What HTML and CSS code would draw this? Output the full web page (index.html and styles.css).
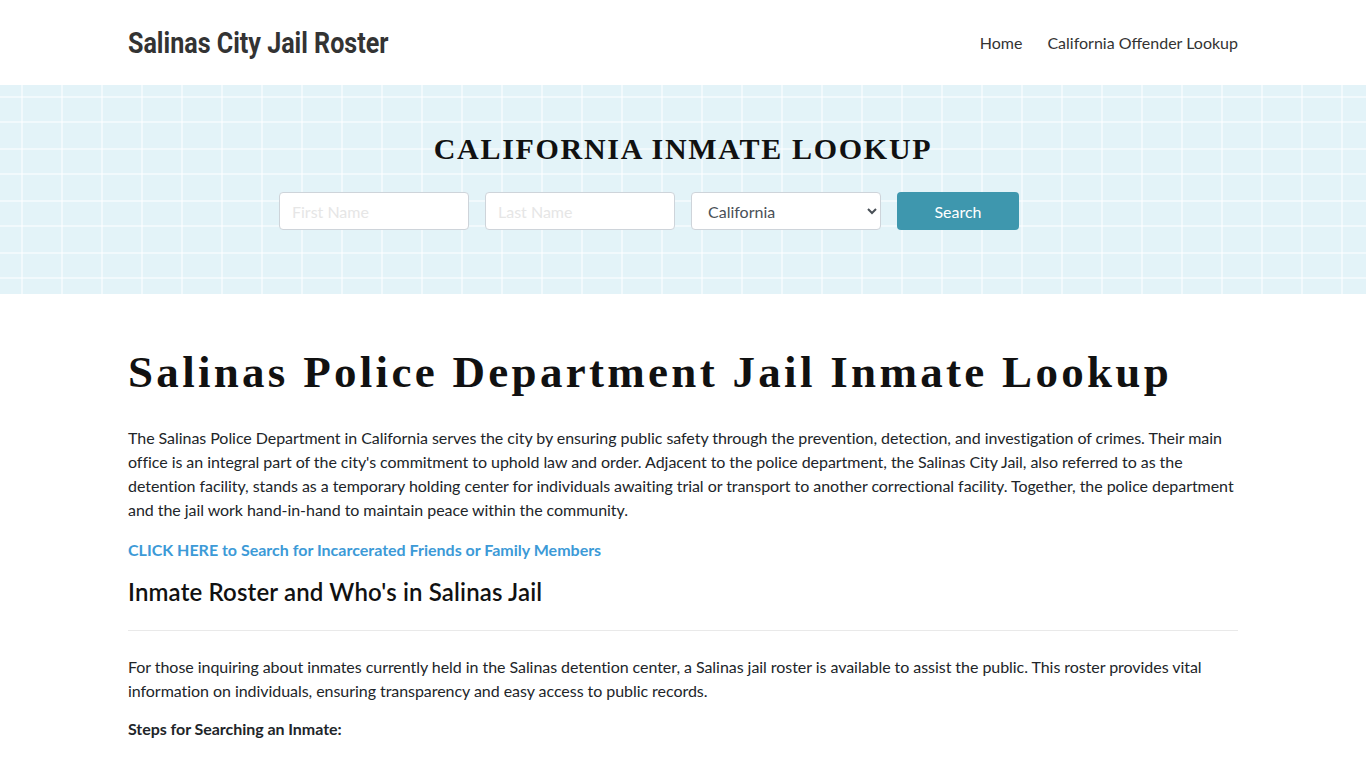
FILE: index.html
```html
<!DOCTYPE html>
<html lang="en">
<head>
<meta charset="utf-8">
<title>Salinas City Jail Roster</title>
<link rel="stylesheet" href="styles.css">
</head>
<body>
<header class="site-header">
  <div class="container header-row">
    <a class="logo" href="#">Salinas City Jail Roster</a>
    <nav class="nav">
      <a href="#">Home</a>
      <a href="#">California Offender Lookup</a>
    </nav>
  </div>
</header>
<section class="banner">
  <h2 class="banner-title">CALIFORNIA INMATE LOOKUP</h2>
  <form class="search-form">
    <input class="field" type="text" placeholder="First Name">
    <input class="field" type="text" placeholder="Last Name">
    <select class="field select">
      <option>California</option>
    </select>
    <button class="btn" type="button">Search</button>
  </form>
</section>
<main class="container content">
  <h1 class="page-title">Salinas Police Department Jail Inmate Lookup</h1>
  <p>The Salinas Police Department in California serves the city by ensuring public safety through the prevention, detection, and investigation of crimes. Their main office is an integral part of the city's commitment to uphold law and order. Adjacent to the police department, the Salinas City Jail, also referred to as the detention facility, stands as a temporary holding center for individuals awaiting trial or transport to another correctional facility. Together, the police department and the jail work hand-in-hand to maintain peace within the community.</p>
  <p><a class="cta" href="#">CLICK HERE to Search for Incarcerated Friends or Family Members</a></p>
  <h2 class="section-title">Inmate Roster and Who's in Salinas Jail</h2>
  <hr class="divider">
  <p class="tight">For those inquiring about inmates currently held in the Salinas detention center, a Salinas jail roster is available to assist the public. This roster provides vital information on individuals, ensuring transparency and easy access to public records.</p>
  <p class="steps">Steps for Searching an Inmate:</p>
</main>
</body>
</html>
```
FILE: styles.css
```css
* { box-sizing: border-box; }
html, body { margin: 0; padding: 0; }
body {
  font-family: Lato, "Open Sans", sans-serif;
  font-size: 16px;
  line-height: 24px;
  letter-spacing: -0.05px;
  color: #212529;
  background: #fff;
}
a { text-decoration: none; }
.container {
  width: 1110px;
  margin: 0 auto;
}
.site-header { height: 85px; }
.header-row {
  height: 85px;
  display: flex;
  align-items: center;
  justify-content: space-between;
}
.logo {
  display: inline-block;
  font-family: Roboto, "DejaVu Sans Condensed", sans-serif;
  font-weight: bold;
  font-size: 29px;
  line-height: 34px;
  letter-spacing: 0;
  color: #333;
  transform: scaleX(0.865);
  transform-origin: left center;
  padding-top: 1px;
}
.nav { display: flex; gap: 25px; }
.nav a { color: #333; font-size: 16px; letter-spacing: 0; }
.banner {
  height: 209px;
  background-color: #e3f3f8;
  background-image:
    linear-gradient(90deg, transparent 21px, rgba(255,255,255,0.5) 21px, rgba(255,255,255,0.5) 23px, transparent 23px),
    linear-gradient(180deg, transparent 11px, rgba(255,255,255,0.5) 11px, rgba(255,255,255,0.5) 13px, transparent 13px, transparent 36px, rgba(255,255,255,0.5) 36px, rgba(255,255,255,0.5) 38px, transparent 38px);
  background-size: 40px 100%, 100% 52px;
  padding-top: 46px;
}
.banner-title {
  margin: 0;
  text-align: center;
  font-family: "Liberation Serif", serif;
  font-weight: bold;
  font-size: 30px;
  line-height: 36px;
  letter-spacing: 1.7px;
  color: #111;
}
.search-form {
  width: 808px;
  margin: 25px auto 0;
  display: flex;
  gap: 16px;
}
.field {
  width: 190px;
  height: 38px;
  border: 1px solid #ced4da;
  border-radius: 4px;
  background: #fff;
  padding: 0 12px;
  font-family: Lato, sans-serif;
  font-size: 16px;
  color: #495057;
}
.field::placeholder { color: #e6e6e6; }
.select { padding: 0 10px 0 12px; }
.btn {
  width: 122px;
  height: 38px;
  border: none;
  border-radius: 4px;
  background: #3e97ae;
  color: #fff;
  font-family: Lato, sans-serif;
  font-size: 16px;
}
.content { padding-top: 48px; }
.page-title {
  margin: 0 0 24px;
  font-family: "Liberation Serif", serif;
  font-weight: bold;
  font-size: 45px;
  line-height: 60px;
  letter-spacing: 3.3px;
  color: #111;
}
.content p { margin: 0 0 16px; }
.content p.tight { margin-bottom: 14px; }
.cta { color: #3c9ad7; font-weight: bold; letter-spacing: 0; }
.section-title {
  margin: 0;
  font-size: 24px;
  line-height: 28px;
  font-weight: 600;
  letter-spacing: 0.15px;
  color: #111;
}
.divider {
  border: 0;
  border-top: 1px solid #e9e9e9;
  margin: 24px 0 24px;
}
.steps { font-weight: bold; }
```
